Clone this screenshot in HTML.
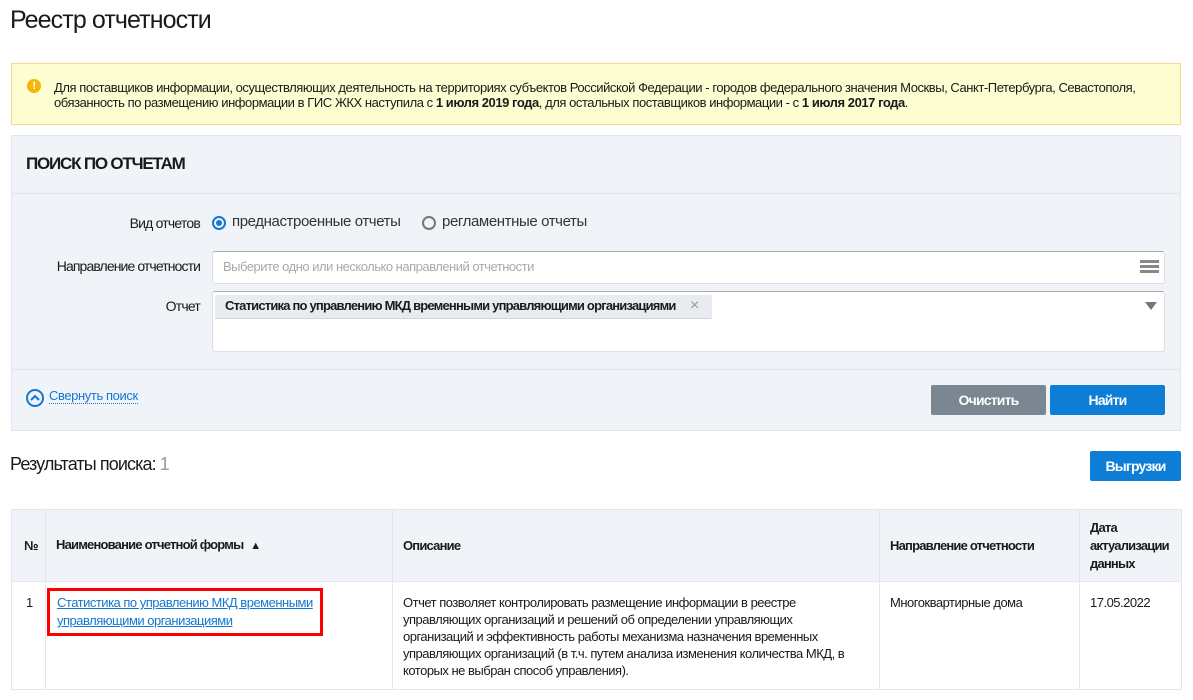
<!DOCTYPE html>
<html><head><meta charset="utf-8"><style>
*{box-sizing:border-box;margin:0;padding:0}
body{width:1193px;height:700px;overflow:hidden;background:#fff;font-family:"Liberation Sans",sans-serif;color:#1a1a1a;position:relative;letter-spacing:-0.5px}
.a{position:absolute;white-space:nowrap}
.btn{position:absolute;color:#fff;font-weight:bold;font-size:14px;text-align:center;border-radius:2px;letter-spacing:-0.8px}
table{white-space:normal}
td,th{border:1px solid #e3e6ea;vertical-align:top;text-align:left;font-size:13px;white-space:normal}
th{background:#f0f3f7;vertical-align:middle;font-weight:bold;padding:0 10px;letter-spacing:-0.8px;line-height:18px}
td{padding:12px 10px 0 10px;line-height:17px;letter-spacing:-0.5px}
</style></head><body>
<div class="a" style="left:10px;top:6px;font-size:25px;letter-spacing:-0.9px">Реестр отчетности</div>

<div class="a" style="left:11px;top:63px;width:1170px;height:62px;background:#fdfdd2;border:1px solid #f6d98c"></div>
<div class="a" style="left:27px;top:79px;width:14px;height:14px;border-radius:50%;background:#f5b60a;color:#fff;font-size:11px;font-weight:bold;text-align:center;line-height:14px">!</div>
<div class="a" style="left:54px;top:80px;font-size:13px;line-height:15px;letter-spacing:-0.45px">Для поставщиков информации, осуществляющих деятельность на территориях субъектов Российской Федерации - городов федерального значения Москвы, Санкт-Петербурга, Севастополя,<br>обязанность по размещению информации в ГИС ЖКХ наступила с <b>1 июля 2019 года</b>, для остальных поставщиков информации - с <b>1 июля 2017 года</b>.</div>

<div class="a" style="left:11px;top:135px;width:1170px;height:296px;background:#f0f3f7;border:1px solid #e2e6ea"></div>
<div class="a" style="left:12px;top:193px;width:1168px;height:1px;background:#e2e6ea"></div>
<div class="a" style="left:12px;top:369px;width:1168px;height:1px;background:#e2e6ea"></div>
<div class="a" style="left:26px;top:154px;font-size:17px;font-weight:bold;letter-spacing:-1.2px">ПОИСК ПО ОТЧЕТАМ</div>

<div class="a" style="left:60px;top:215px;width:140px;text-align:right;font-size:14px;letter-spacing:-0.8px">Вид отчетов</div>
<div class="a" style="left:212px;top:216px;width:14px;height:14px;border-radius:50%;border:2px solid #1577d0"><div style="margin:2px;width:6px;height:6px;border-radius:50%;background:#1577d0"></div></div>
<div class="a" style="left:232px;top:213px;font-size:15px;color:#333;letter-spacing:-0.4px">преднастроенные отчеты</div>
<div class="a" style="left:422px;top:216px;width:14px;height:14px;border-radius:50%;border:2px solid #777"></div>
<div class="a" style="left:442px;top:213px;font-size:15px;color:#333;letter-spacing:-0.4px">регламентные отчеты</div>

<div class="a" style="left:20px;top:258px;width:180px;text-align:right;font-size:14px;letter-spacing:-0.9px">Направление отчетности</div>
<div class="a" style="left:212px;top:251px;width:953px;height:33px;background:#fff;border:1px solid #dcdfe3;border-top-color:#aaa;border-radius:3px"></div>
<div class="a" style="left:223px;top:259px;font-size:13px;color:#aaa;letter-spacing:-0.5px">Выберите одно или несколько направлений отчетности</div>
<div class="a" style="left:1140px;top:260px;width:19px;height:3px;background:#888;box-shadow:0 5px 0 #888,0 10px 0 #888"></div>

<div class="a" style="left:60px;top:298px;width:140px;text-align:right;font-size:14px;letter-spacing:-0.8px">Отчет</div>
<div class="a" style="left:212px;top:291px;width:953px;height:61px;background:#fff;border:1px solid #dcdfe3;border-top-color:#aaa;border-radius:3px"></div>
<div class="a" style="left:215px;top:295px;width:497px;height:24px;background:#e8ebef;border-bottom:1px solid #d0d4d8;border-radius:2px"></div>
<div class="a" style="left:225px;top:298px;font-size:13px;font-weight:bold;letter-spacing:-0.8px">Статистика по управлению МКД временными управляющими организациями</div>
<div class="a" style="left:690px;top:297px;font-size:16px;color:#999">×</div>
<div class="a" style="left:1145px;top:302px;border-left:6px solid transparent;border-right:6px solid transparent;border-top:8px solid #777"></div>

<div class="a" style="left:26px;top:389px;width:18px;height:18px;border-radius:50%;border:2px solid #1577d0"></div>
<svg class="a" style="left:26px;top:389px" width="18" height="18"><path d="M5 11 L9 7 L13 11" fill="none" stroke="#1577d0" stroke-width="2"/></svg>
<div class="a" style="left:49px;top:388px;font-size:13px;color:#1577d0;border-bottom:1px dotted #1577d0;line-height:15px;letter-spacing:-0.4px">Свернуть поиск</div>

<div class="btn" style="left:931px;top:385px;width:115px;height:30px;line-height:30px;background:#7a8691">Очистить</div>
<div class="btn" style="left:1050px;top:385px;width:115px;height:30px;line-height:30px;background:#0e7dd6">Найти</div>

<div class="a" style="left:10px;top:454px;font-size:18px;letter-spacing:-0.9px">Результаты поиска: <span style="color:#999">1</span></div>
<div class="btn" style="left:1090px;top:451px;width:91px;height:30px;line-height:30px;background:#0e7dd6">Выгрузки</div>

<table class="a" style="left:11px;top:509px;width:1170px;border-collapse:collapse;table-layout:fixed">
<colgroup><col style="width:34px"><col style="width:347px"><col style="width:487px"><col style="width:200px"><col style="width:102px"></colgroup>
<tr style="height:72px"><th style="padding:0 0 0 12px">№</th><th>Наименование отчетной формы <span style="font-size:11px;margin-left:4px">▲</span></th><th>Описание</th><th>Направление отчетности</th><th>Дата актуализации данных</th></tr>
<tr style="height:108px"><td style="padding-left:14px">1</td><td style="padding-left:10px"><div style="border:3px solid #f00;margin:-6px 0 0 -9px;width:276px;padding:3px 7px;line-height:18px"><span style="color:#1577d0;text-decoration:underline">Статистика по управлению МКД временными управляющими организациями</span></div></td><td style="padding-right:30px">Отчет позволяет контролировать размещение информации в реестре управляющих организаций и решений об определении управляющих организаций и эффективность работы механизма назначения временных управляющих организаций (в т.ч. путем анализа изменения количества МКД, в которых не выбран способ управления).</td><td>Многоквартирные дома</td><td>17.05.2022</td></tr>
</table>
</body></html>
